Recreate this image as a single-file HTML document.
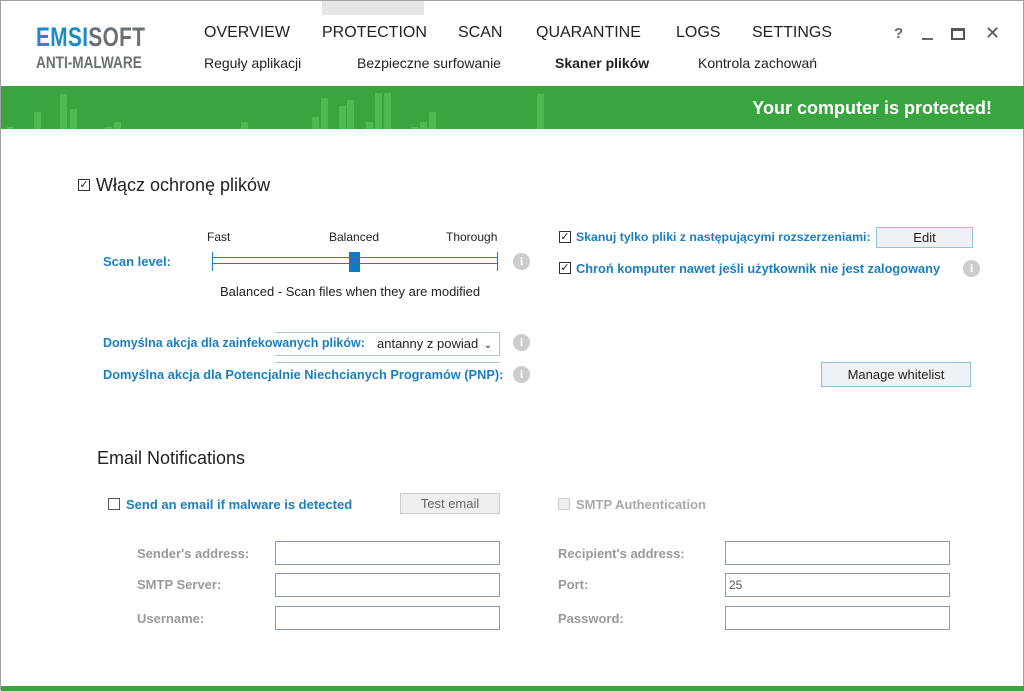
<!DOCTYPE html>
<html><head><meta charset="utf-8"><style>
*{margin:0;padding:0;box-sizing:border-box}
body{width:1024px;height:690px;background:#fff;font-family:"Liberation Sans","DejaVu Sans",sans-serif;position:relative;overflow:hidden;border:1px solid #a0a0a0;color:#222}
.a{position:absolute;white-space:nowrap}
.nav{font-size:16px;color:#222;top:23px}
.sub{font-size:14px;color:#222;top:54px}
.blue{color:#1a7fc0;font-weight:bold;font-size:13px}
.gray{color:#999;font-size:13px}
.cb{position:absolute;width:12px;height:12px;border:1px solid #333;background:#fff;font-size:11px;line-height:10px;text-align:center;font-weight:bold}
.info{position:absolute;width:17px;height:17px;border-radius:50%;background:#ccc;color:#fff;font:bold 12px "Liberation Serif",serif;text-align:center;line-height:17px}
.inp{position:absolute;width:225px;height:24px;border:1px solid #8a9ab0;background:#fff;font-size:12px;padding:4px 3px;color:#555}
.btn{position:absolute;background:#eef2f4;border:1px solid #8cc4d4;font-size:13px;text-align:center;color:#222}
.bar{position:absolute;background:#4bbb52;width:7px;bottom:0}
</style></head><body>
<div class="a" style="left:35px;top:21px;font-size:27px;font-weight:bold;letter-spacing:0.5px;transform:scaleX(0.77);transform-origin:left"><span style="color:#1a8bc8">EMSI</span><span style="color:#6a7175">SOFT</span></div>
<div class="a" style="left:35px;top:52px;font-size:17px;font-weight:bold;color:#6a7175;transform:scaleX(0.8);transform-origin:left">ANTI-MALWARE</div>
<div class="a" style="left:321px;top:0;width:102px;height:14px;background:#e6e6e6"></div>
<div class="a nav" style="left:203px">OVERVIEW</div>
<div class="a nav" style="left:321px">PROTECTION</div>
<div class="a nav" style="left:457px">SCAN</div>
<div class="a nav" style="left:535px">QUARANTINE</div>
<div class="a nav" style="left:675px">LOGS</div>
<div class="a nav" style="left:751px">SETTINGS</div>
<div class="a" style="left:893px;top:24px;font-size:15px;font-weight:bold;color:#666">?</div>
<div class="a" style="left:921px;top:37px;width:11px;height:2px;background:#666"></div>
<div class="a" style="left:950px;top:27px;width:14px;height:12px;border:2px solid #555;border-top-width:3px"></div>
<div class="a" style="left:984px;top:22px;font-size:18px;font-weight:bold;color:#555">✕</div>
<div class="a sub" style="left:203px">Reguły aplikacji</div>
<div class="a sub" style="left:356px">Bezpieczne surfowanie</div>
<div class="a sub" style="left:554px;font-weight:bold">Skaner plików</div>
<div class="a sub" style="left:697px">Kontrola zachowań</div>
<div class="a" style="left:0;top:85px;width:1024px;height:43px;background:#39a53f">
<div class="bar" style="left:6px;height:2px"></div>
<div class="bar" style="left:33px;height:17px"></div>
<div class="bar" style="left:59px;height:35px"></div>
<div class="bar" style="left:69px;height:20px"></div>
<div class="bar" style="left:104px;height:2px"></div>
<div class="bar" style="left:113px;height:7px"></div>
<div class="bar" style="left:240px;height:7px"></div>
<div class="bar" style="left:311px;height:12px"></div>
<div class="bar" style="left:320px;height:31px"></div>
<div class="bar" style="left:338px;height:23px"></div>
<div class="bar" style="left:346px;height:29px"></div>
<div class="bar" style="left:365px;height:7px"></div>
<div class="bar" style="left:374px;height:36px"></div>
<div class="bar" style="left:383px;height:36px"></div>
<div class="bar" style="left:410px;height:2px"></div>
<div class="bar" style="left:419px;height:7px"></div>
<div class="bar" style="left:428px;height:17px"></div>
<div class="bar" style="left:536px;height:35px"></div>
<div class="a" style="right:33px;top:12px;font-size:18px;font-weight:bold;color:#fff">Your computer is protected!</div>
</div>
<div class="cb" style="left:77px;top:178px">✓</div>
<div class="a" style="left:95px;top:174px;font-size:18px">Włącz ochronę plików</div>
<div class="a" style="left:206px;top:229px;font-size:12px">Fast</div>
<div class="a" style="left:328px;top:229px;font-size:12px">Balanced</div>
<div class="a" style="left:445px;top:229px;font-size:12px">Thorough</div>
<div class="a blue" style="left:102px;top:253px">Scan level:</div>
<div class="a" style="left:211px;top:251px;width:1px;height:19px;background:#1a7fc0"></div>
<div class="a" style="left:496px;top:251px;width:1px;height:19px;background:#1a7fc0"></div>
<div class="a" style="left:211px;top:256px;width:286px;height:7px;border-top:1px solid #1a7fc0;border-bottom:1px solid #1a7fc0"></div>
<div class="a" style="left:348px;top:251px;width:11px;height:20px;background:#0e7cc4"></div>
<div class="info" style="left:512px;top:252px">i</div>
<div class="a" style="left:219px;top:283px;font-size:13px">Balanced - Scan files when they are modified</div>
<div class="a" style="left:274px;top:331px;width:225px;height:24px;border:1px solid #a8c8d8;border-left:none"></div>
<div class="a blue" style="left:102px;top:335px;font-size:12.5px">Domyślna akcja dla zainfekowanych plików:</div>
<div class="a" style="left:376px;top:335px;font-size:13px">antanny z powiad <span style="font-size:10px;margin-left:2px">⌄</span></div>
<div class="info" style="left:512px;top:333px">i</div>
<div class="a" style="left:274px;top:361px;width:225px;height:2px;border-top:1px solid #a8c8d8"></div>
<div class="a blue" style="left:102px;top:366px;font-size:12.8px">Domyślna akcja dla Potencjalnie Niechcianych Programów (PNP):</div>
<div class="info" style="left:512px;top:365px">i</div>
<div class="cb" style="left:558px;top:230px">✓</div>
<div class="a blue" style="left:575px;top:229px;font-size:12.3px">Skanuj tylko pliki z następującymi rozszerzeniami:</div>
<div class="btn" style="left:875px;top:226px;width:97px;height:21px;line-height:19px">Edit</div>
<div class="cb" style="left:558px;top:261px">✓</div>
<div class="a blue" style="left:575px;top:260px;font-size:12.8px">Chroń komputer nawet jeśli użytkownik nie jest zalogowany</div>
<div class="info" style="left:962px;top:259px">i</div>
<div class="btn" style="left:820px;top:361px;width:150px;height:25px;line-height:23px">Manage whitelist</div>
<div class="a" style="left:96px;top:447px;font-size:18px">Email Notifications</div>
<div class="cb" style="left:107px;top:497px;border-color:#555"></div>
<div class="a blue" style="left:125px;top:496px">Send an email if malware is detected</div>
<div class="btn" style="left:399px;top:492px;width:100px;height:21px;line-height:19px;background:#eee;border-color:#ccc;color:#666">Test email</div>
<div class="cb" style="left:557px;top:497px;border-color:#ccc;background:#eee"></div>
<div class="a gray" style="left:575px;top:496px;font-weight:bold;color:#aaa">SMTP Authentication</div>
<div class="a gray" style="left:136px;top:545px;font-weight:bold">Sender's address:</div>
<div class="a gray" style="left:136px;top:576px;font-weight:bold">SMTP Server:</div>
<div class="a gray" style="left:136px;top:610px;font-weight:bold">Username:</div>
<div class="inp" style="left:274px;top:540px"></div>
<div class="inp" style="left:274px;top:572px"></div>
<div class="inp" style="left:274px;top:605px"></div>
<div class="a gray" style="left:557px;top:545px;font-weight:bold">Recipient's address:</div>
<div class="a gray" style="left:557px;top:576px;font-weight:bold">Port:</div>
<div class="a gray" style="left:557px;top:610px;font-weight:bold">Password:</div>
<div class="inp" style="left:724px;top:540px"></div>
<div class="inp" style="left:724px;top:572px">25</div>
<div class="inp" style="left:724px;top:605px"></div>
<div class="a" style="left:0;top:685px;width:1024px;height:5px;background:#39a53f"></div>
</body></html>
